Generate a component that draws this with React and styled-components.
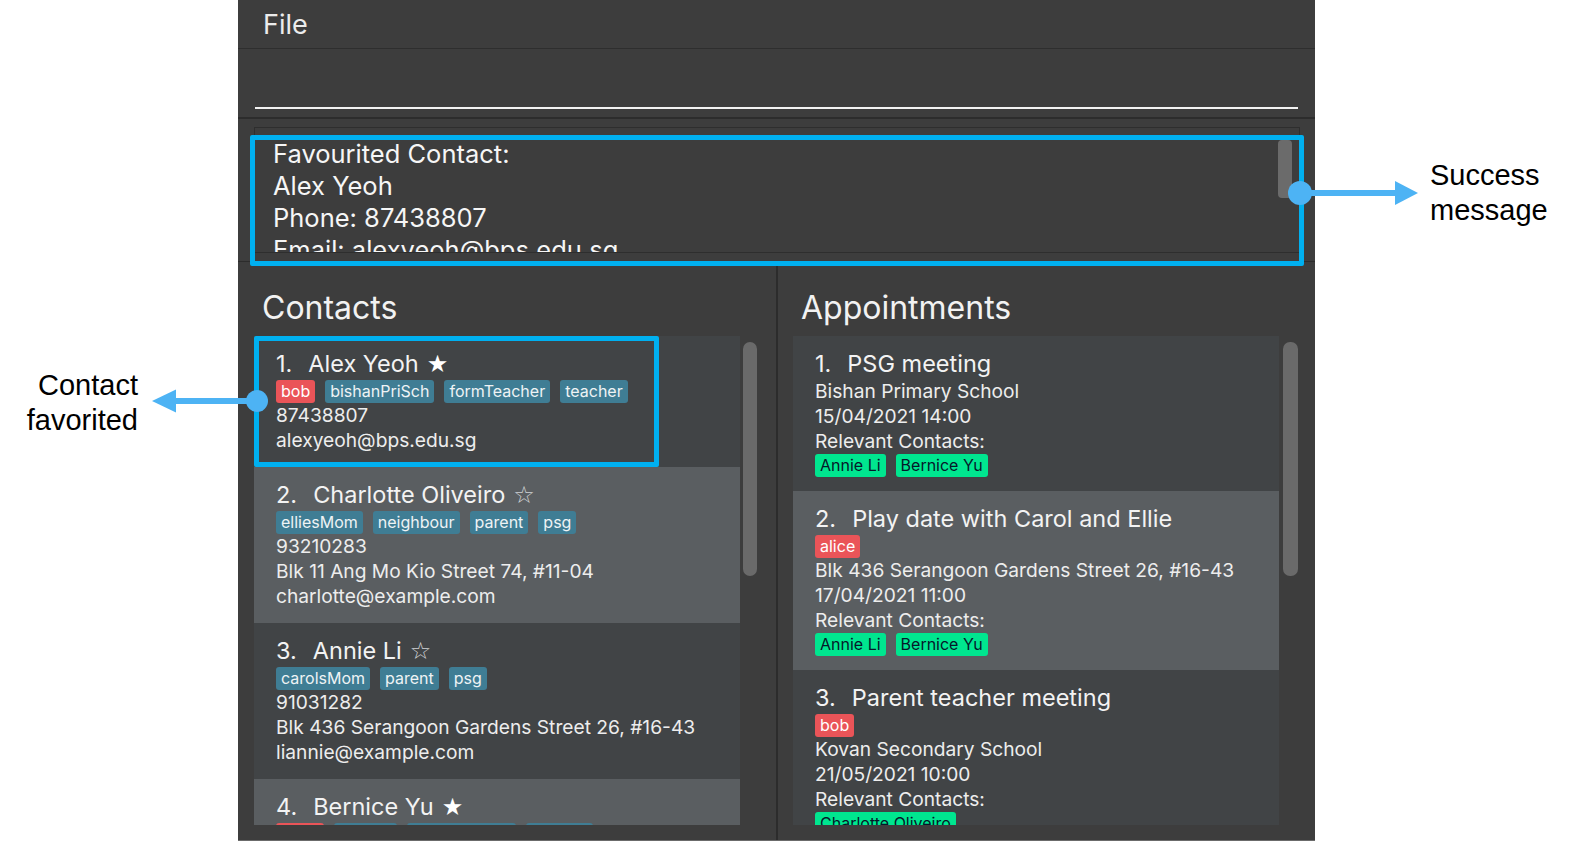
import React from "react";
import styled, { createGlobalStyle } from "styled-components";

const GlobalStyle = createGlobalStyle`
  html, body {
    margin: 0;
    padding: 0;
    background: #ffffff;
  }
  body {
    font-family: "Inter", "Liberation Sans", sans-serif;
  }
`;

const contacts = [
  {
    name: "Alex Yeoh",
    fav: true,
    children: ["bob"],
    tags: ["bishanPriSch", "formTeacher", "teacher"],
    phone: "87438807",
    email: "alexyeoh@bps.edu.sg",
  },
  {
    name: "Charlotte Oliveiro",
    fav: false,
    children: [],
    tags: ["elliesMom", "neighbour", "parent", "psg"],
    phone: "93210283",
    address: "Blk 11 Ang Mo Kio Street 74, #11-04",
    email: "charlotte@example.com",
  },
  {
    name: "Annie Li",
    fav: false,
    children: [],
    tags: ["carolsMom", "parent", "psg"],
    phone: "91031282",
    address: "Blk 436 Serangoon Gardens Street 26, #16-43",
    email: "liannie@example.com",
  },
  {
    name: "Bernice Yu",
    fav: true,
    children: ["carol"],
    tags: ["friends", "bishanPriSch", "teacher"],
    phone: "99272758",
    address: "Blk 30 Lorong 3 Serangoon Gardens, #07-18",
    email: "berniceyu@example.com",
  },
];

const appointments = [
  {
    title: "PSG meeting",
    children: [],
    location: "Bishan Primary School",
    date: "15/04/2021 14:00",
    contacts: ["Annie Li", "Bernice Yu"],
  },
  {
    title: "Play date with Carol and Ellie",
    children: ["alice"],
    location: "Blk 436 Serangoon Gardens Street 26, #16-43",
    date: "17/04/2021 11:00",
    contacts: ["Annie Li", "Bernice Yu"],
  },
  {
    title: "Parent teacher meeting",
    children: ["bob"],
    location: "Kovan Secondary School",
    date: "21/05/2021 10:00",
    contacts: ["Charlotte Oliveiro"],
  },
];

const App = () => {
  return (
    <Stage>
      <GlobalStyle />
      <Window>
        <MenuBar>
          <MenuItem>File</MenuItem>
        </MenuBar>
        <CommandBox>
          <CommandField />
        </CommandBox>
        <ResultPane>
          <ResultBox>
            <ResultText>
              <div>Favourited Contact:</div>
              <div>Alex Yeoh</div>
              <div>Phone: 87438807</div>
              <div>Email: alexyeoh@bps.edu.sg</div>
              <div>Address: Blk 30 Geylang Street 29, #06-40</div>
            </ResultText>
            <ResultThumb />
          </ResultBox>
        </ResultPane>
        <Panes>
          <Pane $divider $padLeft={16}>
            <PaneTitle>Contacts</PaneTitle>
            <ListRow>
              <ListView>
                {contacts.map((c, i) => (
                  <Cell key={c.name} $odd={i % 2 === 1}>
                    <TitleRow>
                      <Index>{i + 1}.</Index>
                      {c.name}
                      <Star $filled={c.fav}>{c.fav ? "★" : "☆"}</Star>
                    </TitleRow>
                    <TagRow>
                      {c.children.map((t) => (
                        <Tag key={t} $kind="child">
                          {t}
                        </Tag>
                      ))}
                      {c.tags.map((t) => (
                        <Tag key={t}>{t}</Tag>
                      ))}
                    </TagRow>
                    <Detail>{c.phone}</Detail>
                    {c.address && <Detail>{c.address}</Detail>}
                    <Detail>{c.email}</Detail>
                  </Cell>
                ))}
              </ListView>
              <ScrollThumb $width={14} $gap={3} />
            </ListRow>
          </Pane>
          <Pane $padLeft={15}>
            <PaneTitle>Appointments</PaneTitle>
            <ListRow>
              <ListView>
                {appointments.map((a, i) => (
                  <Cell key={a.title} $odd={i % 2 === 1}>
                    <TitleRow>
                      <Index>{i + 1}.</Index>
                      {a.title}
                    </TitleRow>
                    {a.children.length > 0 && (
                      <TagRow>
                        {a.children.map((t) => (
                          <Tag key={t} $kind="child">
                            {t}
                          </Tag>
                        ))}
                      </TagRow>
                    )}
                    <Detail>{a.location}</Detail>
                    <Detail>{a.date}</Detail>
                    <Detail>Relevant Contacts:</Detail>
                    <TagRow $tight>
                      {a.contacts.map((t) => (
                        <Tag key={t} $kind="contact">
                          {t}
                        </Tag>
                      ))}
                    </TagRow>
                  </Cell>
                ))}
              </ListView>
              <ScrollThumb $width={15} $gap={4} />
            </ListRow>
          </Pane>
        </Panes>
      </Window>

      {/* callouts drawn over the screenshot */}
      <Highlight $left={250} $top={135} $width={1054} $height={131} />
      <Highlight $left={254} $top={336} $width={405} $height={131} />

      <Pointer $left={145} $top={386} width="125" height="32" viewBox="0 0 125 32">
        <rect x="28" y="12" width="84" height="6" fill="#4db3f4" />
        <polygon points="7,15 31,3.5 31,26.5" fill="#4db3f4" />
        <circle cx="112" cy="15" r="11" fill="#4db3f4" />
      </Pointer>
      <Pointer $left={1286} $top={178} width="136" height="32" viewBox="0 0 136 32">
        <rect x="14" y="12" width="97" height="6" fill="#4db3f4" />
        <polygon points="132,15 109,3 109,27" fill="#4db3f4" />
        <circle cx="14" cy="15" r="12" fill="#4db3f4" />
      </Pointer>

      <CalloutText $left={0} $top={368} $width={138} $align="right">
        Contact
        <br />
        favorited
      </CalloutText>
      <CalloutText $left={1430} $top={158} $width={140} $align="left">
        Success
        <br />
        message
      </CalloutText>
    </Stage>
  );
};

const Stage = styled.div`
  position: relative;
  width: 1570px;
  height: 844px;
  overflow: hidden;
  background: #ffffff;
`;

const Window = styled.div`
  margin-left: 238px;
  width: 1077px;
  height: 841px;
  box-sizing: border-box;
  background: #3d3d3d;
  border-bottom: 1px solid #6b6b6b;
  display: flex;
  flex-direction: column;
  color: #f0f0f0;
`;

const MenuBar = styled.div`
  height: 48px;
  flex-shrink: 0;
  display: flex;
  align-items: center;
  padding-left: 25px;
  border-bottom: 1px solid #2e2e2e;
`;

const MenuItem = styled.span`
  font-size: 27px;
  color: #ececec;
`;

const CommandBox = styled.div`
  height: 70px;
  flex-shrink: 0;
  display: flex;
  align-items: flex-end;
  padding: 0 17px 8px 17px;
  box-sizing: border-box;
  border-bottom: 2px solid #2c2c2c;
`;

const CommandField = styled.div`
  flex: 1;
  height: 30px;
  border-bottom: 2px solid #f2f2f2;
`;

const ResultPane = styled.div`
  flex-shrink: 0;
  padding: 8px 15px 8px 16px;
  border-bottom: 1px solid #2c2c2c;
`;

const ResultBox = styled.div`
  height: 126px;
  box-sizing: border-box;
  border: 1px solid #2e2e2e;
  display: flex;
  overflow: hidden;
`;

const ResultText = styled.div`
  flex: 1;
  padding: 10px 18px 0;
  font-size: 25.5px;
  line-height: 32px;
  color: #f6f6f6;
`;

const ResultThumb = styled.div`
  width: 14px;
  height: 58px;
  margin: 12px 7px 0 0;
  border-radius: 4px;
  background: #6b6b6b;
`;

const Panes = styled.div`
  flex: 1;
  min-height: 0;
  display: flex;
`;

const Pane = styled.div`
  flex: ${(p) => (p.$divider ? "0 0 540px" : "1")};
  min-width: 0;
  box-sizing: border-box;
  display: flex;
  flex-direction: column;
  padding: 26px 0 15px ${(p) => p.$padLeft}px;
  border-right: ${(p) => (p.$divider ? "2px solid #2c2c2c" : "none")};
`;

const PaneTitle = styled.div`
  font-size: 32px;
  line-height: 40px;
  padding-left: 8px;
  margin-bottom: 8px;
  color: #f2f2f2;
`;

const ListRow = styled.div`
  flex: 1;
  min-height: 0;
  display: flex;
  align-items: flex-start;
`;

const ListView = styled.div`
  width: 486px;
  height: 100%;
  overflow: hidden;
  display: flex;
  flex-direction: column;
`;

const ScrollThumb = styled.div`
  width: ${(p) => p.$width}px;
  height: 234px;
  margin: 6px 0 0 ${(p) => p.$gap}px;
  border-radius: 7px;
  background: #6a6a6a;
`;

const Cell = styled.div`
  flex-shrink: 0;
  padding: 13px 22px 14px;
  background: ${(p) => (p.$odd ? "#5a5e61" : "#414446")};
`;

const TitleRow = styled.div`
  height: 30px;
  font-size: 23.5px;
  line-height: 30px;
  color: #f3f3f3;
  white-space: nowrap;
`;

const Index = styled.span`
  margin-right: 16px;
`;

const Star = styled.span`
  font-family: "DejaVu Sans", sans-serif;
  font-size: 24px;
  margin-left: 8px;
  color: ${(p) => (p.$filled ? "#ffffff" : "#cfd2d4")};
`;

const TagRow = styled.div`
  height: ${(p) => (p.$tight ? "23px" : "24px")};
  display: flex;
  align-items: center;
  gap: 10px;
`;

const tagColours = {
  child: { bg: "#ea5458", fg: "#ffffff" },
  contact: { bg: "#00e68f", fg: "#06182a" },
  tag: { bg: "#3f7d94", fg: "#eef3f5" },
};

const Tag = styled.span`
  height: 23px;
  line-height: 23px;
  padding: 0 5px;
  border-radius: 3px;
  font-size: 16px;
  white-space: nowrap;
  background: ${(p) => tagColours[p.$kind || "tag"].bg};
  color: ${(p) => tagColours[p.$kind || "tag"].fg};
`;

const Detail = styled.div`
  font-size: 19.2px;
  line-height: 25px;
  color: #ededed;
  white-space: nowrap;
`;

const Highlight = styled.div`
  position: absolute;
  left: ${(p) => p.$left}px;
  top: ${(p) => p.$top}px;
  width: ${(p) => p.$width}px;
  height: ${(p) => p.$height}px;
  box-sizing: border-box;
  border: 5px solid #00b0f0;
  border-radius: 2px;
  pointer-events: none;
`;

const Pointer = styled.svg`
  position: absolute;
  left: ${(p) => p.$left}px;
  top: ${(p) => p.$top}px;
`;

const CalloutText = styled.div`
  position: absolute;
  left: ${(p) => p.$left}px;
  top: ${(p) => p.$top}px;
  width: ${(p) => p.$width}px;
  text-align: ${(p) => p.$align};
  font-family: "Liberation Sans", Arial, sans-serif;
  font-size: 29px;
  line-height: 35px;
  color: #000000;
`;

export default App;
